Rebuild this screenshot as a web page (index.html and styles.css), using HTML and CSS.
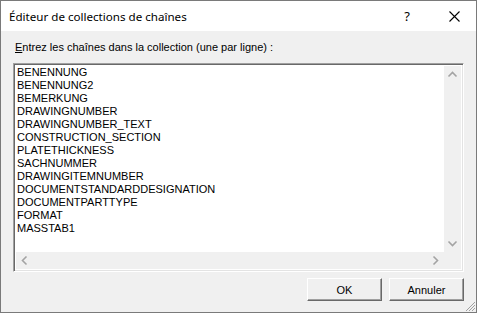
FILE: index.html
```html
<!DOCTYPE html>
<html lang="fr">
<head>
    <meta charset="UTF-8">
    <title>Éditeur de collections de chaînes</title>
    <link rel="stylesheet" href="styles.css">
</head>
<body>
    <div class="window">
        <div class="titlebar">
            <span class="title">Éditeur de collections de chaînes</span>
            <span class="help">?</span>
            <svg class="close" width="11" height="11" viewBox="0 0 11 11">
                <path d="M0.5 0.5 L10.5 10.5 M10.5 0.5 L0.5 10.5" stroke="#000" stroke-width="1.1" fill="none"/>
            </svg>
        </div>

        <div class="content">
            <div class="label"><u>E</u>ntrez les chaînes dans la collection (une par ligne) :</div>

            <div class="editbox">
                <div class="lines">
                    <div>BENENNUNG</div>
                    <div>BENENNUNG2</div>
                    <div>BEMERKUNG</div>
                    <div>DRAWINGNUMBER</div>
                    <div>DRAWINGNUMBER_TEXT</div>
                    <div>CONSTRUCTION_SECTION</div>
                    <div>PLATETHICKNESS</div>
                    <div>SACHNUMMER</div>
                    <div>DRAWINGITEMNUMBER</div>
                    <div>DOCUMENTSTANDARDDESIGNATION</div>
                    <div>DOCUMENTPARTTYPE</div>
                    <div>FORMAT</div>
                    <div>MASSTAB1</div>
                </div>
                <div class="vscroll">
                    <svg width="17" height="17" viewBox="0 0 17 17"><path d="M4.5 10.5 L8.5 6.5 L12.5 10.5" stroke="#a3a3a3" stroke-width="1.6" fill="none"/></svg>
                    <svg width="17" height="17" viewBox="0 0 17 17"><path d="M4.5 6.5 L8.5 10.5 L12.5 6.5" stroke="#a3a3a3" stroke-width="1.6" fill="none"/></svg>
                </div>
                <div class="hscroll">
                    <svg width="17" height="17" viewBox="0 0 17 17"><path d="M10.5 4.5 L6.5 8.5 L10.5 12.5" stroke="#a3a3a3" stroke-width="1.6" fill="none"/></svg>
                    <svg width="17" height="17" viewBox="0 0 17 17"><path d="M6.5 4.5 L10.5 8.5 L6.5 12.5" stroke="#a3a3a3" stroke-width="1.6" fill="none"/></svg>
                </div>
                <div class="corner"></div>
            </div>

            <div class="buttons">
                <button class="btn">OK</button>
                <button class="btn">Annuler</button>
            </div>
        </div>

        <svg class="grip" width="12" height="12" viewBox="0 0 12 12">
            <path d="M11 2 L2 11 M11 5 L5 11 M11 8 L8 11" stroke="#a0a0a0" stroke-width="1" fill="none"/>
        </svg>
    </div>
</body>
</html>
```

FILE: styles.css
```css
body { margin: 0; background: #f0f0f0; }

.window { position: relative; width: 477px; height: 313px; box-sizing: border-box; border: 1px solid #7a7a7a; background: #f0f0f0; display: flex; flex-direction: column; }

.titlebar { height: 30px; background: #fff; display: flex; align-items: center; font-family: "Noto Sans", sans-serif; font-size: 11.6px; color: #000; }

.title { flex: 1; padding-left: 8px; }

.help { font-size: 13px; margin-right: 39px; }

.close { margin-right: 16px; }

.content { flex: 1; display: flex; flex-direction: column; padding: 0 12px 0 12px; font-family: "Liberation Sans", Arial, sans-serif; font-size: 11px; }

.label { padding: 10px 0 0 2px; height: 22px; }

.editbox { height: 209px; box-sizing: border-box; border-top: 1px solid #a0a0a0; border-left: 1px solid #a0a0a0; border-right: 1px solid #fff; border-bottom: 1px solid #fff; box-shadow: inset 1px 1px 0 #696969, inset -1px -1px 0 #e3e3e3; padding: 2px; display: grid; grid-template-columns: 1fr 17px; grid-template-rows: 1fr 17px; background: #fff; }

.lines { padding: 0 0 0 1px; line-height: 13px; color: #000; background: #fff; }

.vscroll { background: #f0f0f0; display: flex; flex-direction: column; justify-content: space-between; }

.hscroll { background: #f0f0f0; display: flex; justify-content: space-between; }

.corner { background: #f0f0f0; }

.buttons { display: flex; justify-content: flex-end; gap: 7px; margin-top: 6px; }

.btn { width: 75px; height: 23px; padding: 0; box-sizing: border-box; background: #f0f0f0; border: none; border-top: 1px solid #fff; border-left: 1px solid #fff; border-right: 1px solid #696969; border-bottom: 1px solid #696969; box-shadow: inset -1px -1px 0 #a0a0a0; font-family: "Liberation Sans", Arial, sans-serif; font-size: 11px; color: #000; }

.grip { position: absolute; right: 0; bottom: 0; }
```
